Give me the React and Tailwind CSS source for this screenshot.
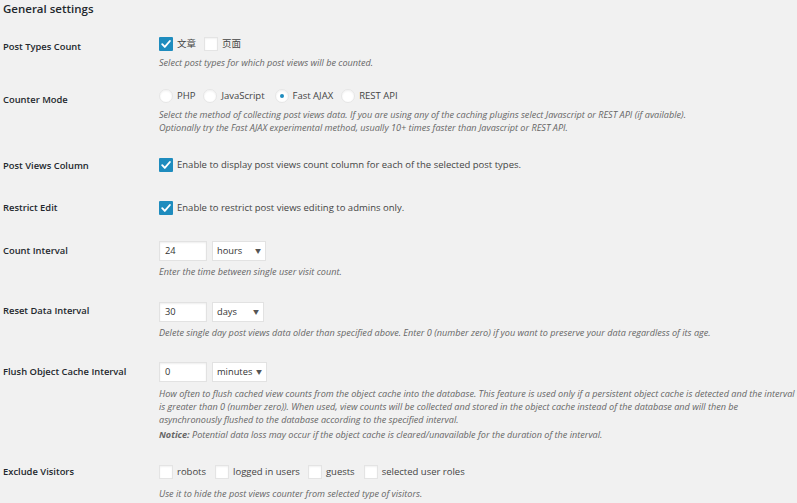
import React from "react";

const FONT = { fontFamily: '"Open Sans", "Noto Sans", "Noto Sans CJK SC", sans-serif' };

const Check = ({ checked }) =>
  checked ? (
    <span className="w-[14px] h-[14px] shrink-0 bg-[#1e8cbe] rounded-[1px] flex items-center justify-center">
      <svg width="12" height="12" viewBox="0 0 12 12">
        <path d="M2.2 6.2 L4.8 8.9 L9.9 3" fill="none" stroke="#fff" strokeWidth="1.9" strokeLinecap="round" strokeLinejoin="round" />
      </svg>
    </span>
  ) : (
    <span className="w-[14px] h-[14px] shrink-0 bg-white border border-[#e4e4e4] shadow-[inset_0_1px_2px_rgba(0,0,0,0.06)]" />
  );

const Radio = ({ checked }) => (
  <span className="w-[14px] h-[14px] shrink-0 rounded-full bg-white border border-[#e6e6e6] shadow-[inset_0_1px_2px_rgba(0,0,0,0.06)] flex items-center justify-center">
    {checked && <span className="w-[4px] h-[4px] rounded-full bg-[#1e8cbe]" />}
  </span>
);

const Opt = ({ children, className = "" }) => (
  <span className={`flex items-center gap-[4px] ${className}`}>{children}</span>
);

const Desc = ({ children, className = "" }) => (
  <p className={`text-[9.1px] leading-[13px] italic text-[#666] whitespace-nowrap ${className}`}>{children}</p>
);

const NumSelect = ({ value, unit, w }) => (
  <div className="flex items-center h-5 gap-[5px]">
    <div className="w-[48px] h-5 bg-white border border-[#e2e2e2] shadow-[inset_0_1px_2px_rgba(0,0,0,0.07)] px-[5px] flex items-center text-[9.3px] text-[#333]">
      {value}
    </div>
    <div className={`${w} h-5 bg-white border border-[#e2e2e2] px-[4px] flex items-center justify-between text-[9.3px] text-[#333]`}>
      <span>{unit}</span>
      <span className="text-[6px] text-[#555]">▼</span>
    </div>
  </div>
);

const Label = ({ children, className = "" }) => (
  <div className={`w-[156px] shrink-0 text-[9.4px] leading-5 font-semibold text-[#23282d] ${className}`}>{children}</div>
);

export default function App() {
  return (
    <div className="w-[797px] h-[503px] overflow-hidden bg-[#f1f1f1] pl-[3px] text-[#444]" style={FONT}>
      <h2 className="text-[11.5px] leading-[18px] font-semibold text-[#23282d]">General settings</h2>

      <div className="flex mt-[16px]">
        <Label className="pt-[3px]">Post Types Count</Label>
        <div>
          <div className="flex items-center h-5 text-[9.5px]">
            <Opt className="mr-[8px]"><Check checked /><span>文章</span></Opt>
            <Opt><Check /><span>页面</span></Opt>
          </div>
          <Desc className="mt-[2px]">Select post types for which post views will be counted.</Desc>
        </div>
      </div>

      <div className="flex mt-[17px]">
        <Label className="pt-[4px]">Counter Mode</Label>
        <div>
          <div className="flex items-center h-5 text-[9.5px]">
            <Opt className="mr-[8px]"><Radio /><span>PHP</span></Opt>
            <Opt className="mr-[10px]"><Radio /><span>JavaScript</span></Opt>
            <Opt className="mr-[8px]"><Radio checked /><span>Fast AJAX</span></Opt>
            <Opt><Radio /><span>REST API</span></Opt>
          </div>
          <Desc className="mt-[2px]">
            Select the method of collecting post views data. If you are using any of the caching plugins select Javascript or REST API (if available).
            <br />
            Optionally try the Fast AJAX experimental method, usually 10+ times faster than Javascript or REST API.
          </Desc>
        </div>
      </div>

      <div className="flex mt-[21px]">
        <Label className="pt-[1px]">Post Views Column</Label>
        <Opt className="h-5 text-[9.5px]"><Check checked /><span>Enable to display post views count column for each of the selected post types.</span></Opt>
      </div>

      <div className="flex mt-[22px]">
        <Label>Restrict Edit</Label>
        <Opt className="h-5 text-[9.5px]"><Check checked /><span>Enable to restrict post views editing to admins only.</span></Opt>
      </div>

      <div className="flex mt-[23px]">
        <Label>Count Interval</Label>
        <div>
          <NumSelect value="24" unit="hours" w="w-[54px]" />
          <Desc className="mt-[4px]">Enter the time between single user visit count.</Desc>
        </div>
      </div>

      <div className="flex mt-[24px]">
        <Label className="-mt-[1px]">Reset Data Interval</Label>
        <div>
          <NumSelect value="30" unit="days" w="w-[52px]" />
          <Desc className="mt-[4px]">Delete single day post views data older than specified above. Enter 0 (number zero) if you want to preserve your data regardless of its age.</Desc>
        </div>
      </div>

      <div className="flex mt-[23px]">
        <Label>Flush Object Cache Interval</Label>
        <div>
          <NumSelect value="0" unit="minutes" w="w-[55px]" />
          <Desc className="mt-[5px]">
            How often to flush cached view counts from the object cache into the database. This feature is used only if a persistent object cache is detected and the interval
            <br />
            is greater than 0 (number zero)). When used, view counts will be collected and stored in the object cache instead of the database and will then be
            <br />
            asynchronously flushed to the database according to the specified interval.
          </Desc>
          <Desc className="mt-[2px]">
            <b className="font-bold">Notice:</b> Potential data loss may occur if the object cache is cleared/unavailable for the duration of the interval.
          </Desc>
        </div>
      </div>

      <div className="flex mt-[21px]">
        <Label>Exclude Visitors</Label>
        <div>
          <div className="flex items-center h-5 text-[9.5px]">
            <Opt className="mr-[9px]"><Check /><span>robots</span></Opt>
            <Opt className="mr-[8px]"><Check /><span>logged in users</span></Opt>
            <Opt className="mr-[9px]"><Check /><span>guests</span></Opt>
            <Opt><Check /><span>selected user roles</span></Opt>
          </div>
          <Desc className="mt-[5px]">Use it to hide the post views counter from selected type of visitors.</Desc>
        </div>
      </div>
    </div>
  );
}
